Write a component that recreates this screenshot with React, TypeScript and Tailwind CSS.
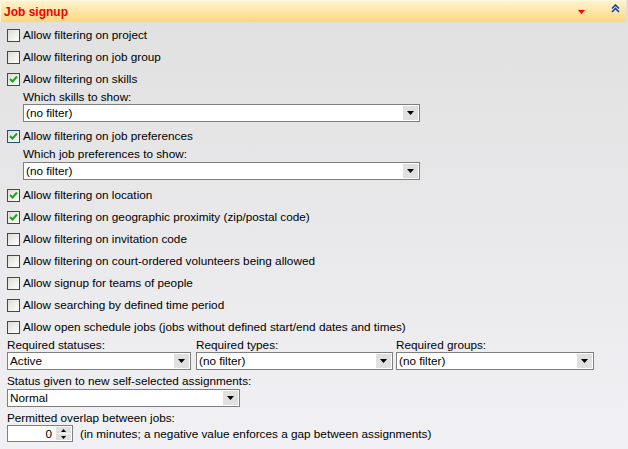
import React from 'react';

const FONT = { fontFamily: '"Liberation Sans", Arial, sans-serif' };

function Check({ checked }: { checked?: boolean }) {
  return (
    <span className="relative inline-block w-[13px] h-[13px] shrink-0 border border-[#1c5180] bg-gradient-to-br from-[#dcdcd7] to-white">
      {checked && (
        <svg className="absolute left-[1px] top-[1px]" width="9" height="9" viewBox="0 0 9 9">
          <path d="M1 4 L3.5 6.5 L8 1.5" stroke="#21a121" strokeWidth="2" fill="none" />
        </svg>
      )}
    </span>
  );
}

function CheckRow({ label, checked, className = '' }: { label: string; checked?: boolean; className?: string }) {
  return (
    <div className={`flex items-center h-[22px] pl-[7px] gap-[3px] ${className}`}>
      <Check checked={checked} />
      <span className="text-[11.75px] text-black whitespace-nowrap">{label}</span>
    </div>
  );
}

function Select({ value, className = '' }: { value: string; className?: string }) {
  return (
    <div className={`flex items-stretch h-[18px] border border-[#7f7f7f] bg-white ${className}`}>
      <span className="flex-1 pl-[2px] text-[11.75px] leading-[16px] text-black whitespace-nowrap overflow-hidden">{value}</span>
      <span className="w-[15px] m-[1px] bg-[#e0e0e0] flex items-center justify-center">
        <svg width="7" height="4" viewBox="0 0 7 4">
          <path d="M0 0 H7 L3.5 4 Z" fill="#000" />
        </svg>
      </span>
    </div>
  );
}

function Label({ text, className = '' }: { text: string; className?: string }) {
  return <div className={`h-[14px] text-[11.75px] leading-[14px] text-black whitespace-nowrap ${className}`}>{text}</div>;
}

export default function App() {
  return (
    <div style={FONT} className="w-[628px] h-[449px] bg-gradient-to-b from-[#e0e0e0] to-[#f1f1f5] overflow-hidden">
      {/* header */}
      <div className="h-[22px] mr-[2px] flex items-center bg-gradient-to-b from-[#fff3cc] to-[#ffd67c] border-l border-t border-[#fff7e0]">
        <span className="pl-[3px] text-[12px] font-bold text-[#f20000] flex-1">Job signup</span>
        <svg className="mr-[26px]" width="7" height="4" viewBox="0 0 7 4">
          <path d="M0 0 H7 L3.5 4 Z" fill="#ff0000" />
        </svg>
        <svg className="mr-[6px] mb-[6px]" width="9" height="9" viewBox="0 0 9 9">
          <path d="M1 4.5 L4.5 1 L8 4.5 M1 8 L4.5 4.5 L8 8" stroke="#1544b0" strokeWidth="1.6" fill="none" />
        </svg>
      </div>

      <div className="pt-[2px]">
        <CheckRow label="Allow filtering on project" />
        <CheckRow label="Allow filtering on job group" />
        <CheckRow label="Allow filtering on skills" checked />
        <div className="pl-[23px] pr-[208px]">
          <Label text="Which skills to show:" />
          <Select value="(no filter)" />
        </div>
        <CheckRow label="Allow filtering on job preferences" checked className="mt-[3px]" />
        <div className="pl-[23px] pr-[208px]">
          <Label text="Which job preferences to show:" />
          <Select value="(no filter)" className="mt-[1px]" />
        </div>
        <CheckRow label="Allow filtering on location" checked className="mt-[4px]" />
        <CheckRow label="Allow filtering on geographic proximity (zip/postal code)" checked />
        <CheckRow label="Allow filtering on invitation code" />
        <CheckRow label="Allow filtering on court-ordered volunteers being allowed" />
        <CheckRow label="Allow signup for teams of people" />
        <CheckRow label="Allow searching by defined time period" />
        <CheckRow label="Allow open schedule jobs (jobs without defined start/end dates and times)" />

        <div className="flex pl-[7px]">
          <div className="w-[184px]">
            <Label text="Required statuses:" />
            <Select value="Active" />
          </div>
          <div className="w-[197px] ml-[5px]">
            <Label text="Required types:" />
            <Select value="(no filter)" />
          </div>
          <div className="w-[198px] ml-[3px]">
            <Label text="Required groups:" />
            <Select value="(no filter)" />
          </div>
        </div>

        <div className="pl-[7px] mt-[4px]">
          <Label text="Status given to new self-selected assignments:" />
          <Select value="Normal" className="w-[233px] mt-[1px]" />
        </div>

        <div className="pl-[7px] mt-[4px]">
          <Label text="Permitted overlap between jobs:" />
          <div className="flex items-center gap-[7px]">
            <div className="flex h-[17px] w-[66px] border border-[#7f7f7f] bg-white">
              <span className="flex-1 text-right pr-[3px] text-[11.75px] leading-[15px]">0</span>
              <span className="w-[15px] m-[1px] flex flex-col gap-[1px]">
                <span className="flex-1 bg-[#e0e0e0] flex items-center justify-center">
                  <svg width="5" height="3" viewBox="0 0 5 3"><path d="M0 3 H5 L2.5 0 Z" fill="#000" /></svg>
                </span>
                <span className="flex-1 bg-[#e0e0e0] flex items-center justify-center">
                  <svg width="5" height="3" viewBox="0 0 5 3"><path d="M0 0 H5 L2.5 3 Z" fill="#000" /></svg>
                </span>
              </span>
            </div>
            <span className="text-[11.75px] whitespace-nowrap">(in minutes; a negative value enforces a gap between assignments)</span>
          </div>
        </div>
      </div>
    </div>
  );
}
